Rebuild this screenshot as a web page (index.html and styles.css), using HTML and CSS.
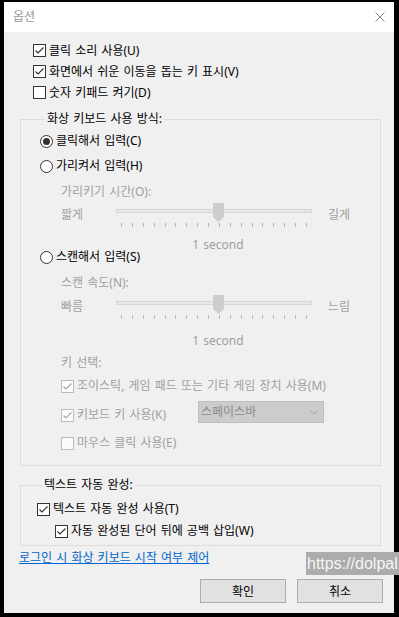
FILE: index.html
```html
<!DOCTYPE html>
<html lang="ko">
<head>
    <meta charset="UTF-8">
    <meta name="viewport" content="width=device-width, initial-scale=1.0">
    <title>옵션</title>
    <link rel="stylesheet" href="styles.css">
</head>
<body>
    <div class="window">
        <div class="titleBar">
            <span class="title">옵션</span>
            <svg class="closeIcon" width="10" height="10" viewBox="0 0 10 10"><path d="M0.5 0.5 L9.5 9.5 M9.5 0.5 L0.5 9.5" stroke="#8c8c8c" stroke-width="1"/></svg>
        </div>

        <div class="content">
            <label class="check topCheck">
                <span class="box"><svg width="11" height="11" viewBox="0 0 11 11"><polyline points="1.5,5.5 4,8 9.5,2.5" fill="none" stroke="#333" stroke-width="1.2"/></svg></span>
                클릭 소리 사용(U)
            </label>
            <label class="check topCheck">
                <span class="box"><svg width="11" height="11" viewBox="0 0 11 11"><polyline points="1.5,5.5 4,8 9.5,2.5" fill="none" stroke="#333" stroke-width="1.2"/></svg></span>
                화면에서 쉬운 이동을 돕는 키 표시(V)
            </label>
            <label class="check topCheck">
                <span class="box"></span>
                숫자 키패드 켜기(D)
            </label>

            <fieldset class="group">
                <legend>화상 키보드 사용 방식:</legend>

                <label class="radio r1">
                    <svg width="13" height="13" viewBox="0 0 13 13"><circle cx="6.5" cy="6.5" r="6" fill="#fff" stroke="#333"/><circle cx="6.5" cy="6.5" r="3.5" fill="#333"/></svg>
                    클릭해서 입력(C)
                </label>
                <label class="radio r2">
                    <svg width="13" height="13" viewBox="0 0 13 13"><circle cx="6.5" cy="6.5" r="6" fill="#fff" stroke="#333"/></svg>
                    가리켜서 입력(H)
                </label>

                <div class="sub dim timeLabel">가리키기 시간(O):</div>
                <div class="slider s1">
                    <span class="sliderLabel">짧게</span>
                    <div class="track">
                        <svg class="thumb" width="11" height="19" viewBox="0 0 11 19"><polygon points="0,0 11,0 11,14 5.5,19 0,14" fill="#cdcdcd"/></svg>
                    </div>
                    <span class="sliderLabel end">길게</span>
                </div>
                <div class="ticks"><i></i><i></i><i></i><i></i><i></i><i></i><i></i><i></i><i></i><i></i><i></i><i></i><i></i><i></i><i></i><i></i><i></i><i></i></div>
                <div class="value v1">1 second</div>

                <label class="radio r3">
                    <svg width="13" height="13" viewBox="0 0 13 13"><circle cx="6.5" cy="6.5" r="6" fill="#fff" stroke="#333"/></svg>
                    스캔해서 입력(S)
                </label>

                <div class="sub dim speedLabel">스캔 속도(N):</div>
                <div class="slider s2">
                    <span class="sliderLabel">빠름</span>
                    <div class="track">
                        <svg class="thumb" width="11" height="19" viewBox="0 0 11 19"><polygon points="0,0 11,0 11,14 5.5,19 0,14" fill="#cdcdcd"/></svg>
                    </div>
                    <span class="sliderLabel end">느림</span>
                </div>
                <div class="ticks"><i></i><i></i><i></i><i></i><i></i><i></i><i></i><i></i><i></i><i></i><i></i><i></i><i></i><i></i><i></i><i></i><i></i><i></i></div>
                <div class="value v2">1 second</div>

                <div class="sub dim keyLabel">키 선택:</div>
                <label class="check sub dim joy">
                    <span class="box disabled"><svg width="11" height="11" viewBox="0 0 11 11"><polyline points="1.5,5.5 4,8 9.5,2.5" fill="none" stroke="#a8a8a8" stroke-width="1.2"/></svg></span>
                    조이스틱, 게임 패드 또는 기타 게임 장치 사용(M)
                </label>
                <div class="sub keyRow">
                    <label class="check dim keyCheck">
                        <span class="box disabled"><svg width="11" height="11" viewBox="0 0 11 11"><polyline points="1.5,5.5 4,8 9.5,2.5" fill="none" stroke="#a8a8a8" stroke-width="1.2"/></svg></span>
                        키보드 키 사용(K)
                    </label>
                    <div class="select">
                        <span>스페이스바</span>
                        <svg width="8" height="5" viewBox="0 0 8 5"><polyline points="0.5,0.5 4,4 7.5,0.5" fill="none" stroke="#a4a4a4" stroke-width="1"/></svg>
                    </div>
                </div>
                <label class="check sub dim mouse">
                    <span class="box disabled"></span>
                    마우스 클릭 사용(E)
                </label>
            </fieldset>

            <fieldset class="group autoGroup">
                <legend>텍스트 자동 완성:</legend>
                <label class="check autoCheck">
                    <span class="box"><svg width="11" height="11" viewBox="0 0 11 11"><polyline points="1.5,5.5 4,8 9.5,2.5" fill="none" stroke="#333" stroke-width="1.2"/></svg></span>
                    텍스트 자동 완성 사용(T)
                </label>
                <label class="check autoSpace">
                    <span class="box"><svg width="11" height="11" viewBox="0 0 11 11"><polyline points="1.5,5.5 4,8 9.5,2.5" fill="none" stroke="#333" stroke-width="1.2"/></svg></span>
                    자동 완성된 단어 뒤에 공백 삽입(W)
                </label>
            </fieldset>

            <div class="linkRow"><a href="#" class="link">로그인 시 화상 키보드 시작 여부 제어</a></div>

            <div class="buttons">
                <button type="button">확인</button>
                <button type="button">취소</button>
            </div>
        </div>
    </div>

    <div class="watermark">https://dolpal</div>
</body>
</html>
```

FILE: styles.css
```css
* {
    margin: 0;
    padding: 0;
    box-sizing: border-box;
}

html, body {
    height: 100%;
    overflow: hidden;
}

body {
    background: #000;
    font-family: "Noto Sans", "Noto Sans CJK KR", sans-serif;
    font-size: 12px;
    color: #000;
    word-spacing: 1px;
    position: relative;
}

.window {
    margin: 2px 0 0 4px;
    width: 390px;
    height: 611px;
    background: #f0f0f0;
}

.titleBar {
    height: 30px;
    background: #fff;
    display: flex;
    align-items: center;
    justify-content: space-between;
    padding: 0 9px;
}

.title {
    color: #9a9a9a;
    line-height: 16px;
}

.content {
    padding: 8px 13px 0 16px;
}

/* checkbox and radio rows */
.check, .radio {
    display: flex;
    align-items: center;
    gap: 3px;
    height: 16px;
    line-height: 16px;
    white-space: nowrap;
}

.radio svg {
    flex: none;
}

.box {
    flex: none;
    display: flex;
    width: 13px;
    height: 13px;
    border: 1px solid #333;
    background: #fff;
}

.box.disabled {
    border-color: #bcbcbc;
    background: #fcfcfc;
}

.dim {
    color: #a0a0a0;
}

.topCheck {
    height: 21px;
    margin-left: 13px;
}

/* group boxes */
.group {
    border: 1px solid #dcdcdc;
    margin-top: 8px;
    padding: 0 0 14px 19px;
    min-width: 0;
}

.group legend {
    margin-left: 5px;
    padding: 0 2px;
    line-height: 16px;
}

.sub {
    margin-left: 21px;
    line-height: 16px;
    height: 16px;
}

.r1 { margin-top: 6px; }
.r2 { margin-top: 9px; }
.timeLabel { margin-top: 10px; }
.r3 { height: 12px; }
.speedLabel { margin-top: 12px; }
.keyLabel { margin-top: 6px; }
.joy { margin-top: 7px; }
.mouse { margin-top: 12px; }

/* sliders */
.slider {
    display: flex;
    align-items: flex-start;
    height: 19px;
    margin-left: 21px;
}

.s1 { margin-top: 3px; }
.s2 { margin-top: 4px; }

.sliderLabel {
    width: 55px;
    margin-top: 4px;
    line-height: 16px;
    color: #a0a0a0;
}

.sliderLabel.end {
    width: auto;
    margin-left: 16px;
}

.track {
    position: relative;
    width: 196px;
    height: 4px;
    margin-top: 6px;
    border: 1px solid #d6d6d6;
    background: #e7e7e7;
}

.thumb {
    position: absolute;
    left: 96px;
    top: -7px;
}

.ticks {
    display: flex;
    justify-content: space-between;
    width: 186px;
    height: 4px;
    margin: 1px 0 0 81px;
}

.ticks i {
    width: 1px;
    height: 4px;
    background: #b8b8b8;
}

.value {
    width: 204px;
    margin-left: 76px;
    text-align: center;
    color: #a0a0a0;
}

.v1 {
    margin-top: 12px;
    height: 12px;
    line-height: 12px;
}

.v2 {
    margin-top: 14px;
    height: 16px;
    line-height: 16px;
}

/* key select row */
.keyRow {
    display: flex;
    align-items: flex-start;
    height: 22px;
    margin-top: 7px;
}

.keyCheck {
    width: 137px;
    margin-top: 6px;
}

.select {
    display: flex;
    align-items: center;
    justify-content: space-between;
    width: 126px;
    height: 22px;
    padding: 0 5px 0 2px;
    background: #cccccc;
    border: 1px solid #bfbfbf;
    color: #8a8a8a;
}

/* text autocomplete group */
.autoGroup {
    margin-top: 11px;
    padding: 0 0 6px 16px;
}

.autoCheck { margin-top: 8px; }

.autoSpace {
    margin: 6px 0 0 18px;
}

.linkRow {
    margin: 4px 0 0 -1px;
    line-height: 16px;
}

.link {
    color: #0066cc;
    text-decoration: underline;
}

.buttons {
    display: flex;
    justify-content: flex-end;
    gap: 11px;
    margin: 13px -2px 0 0;
}

button {
    width: 86px;
    height: 24px;
    background: #e1e1e1;
    border: 1px solid #adadad;
    font-family: inherit;
    font-size: 12px;
    color: #000;
}

.watermark {
    position: absolute;
    left: 306px;
    top: 552px;
    width: 93px;
    height: 23px;
    overflow: hidden;
    white-space: nowrap;
    background: #acacac;
    color: #f6f6f6;
    font-family: "Liberation Sans", Arial, sans-serif;
    font-size: 16px;
    line-height: 23px;
    padding-left: 1px;
    word-spacing: 0;
}
```
